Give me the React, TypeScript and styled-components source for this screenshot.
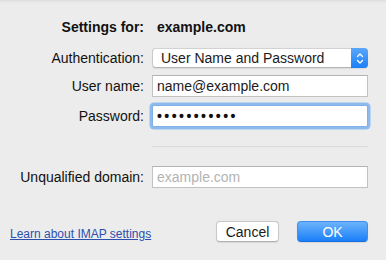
import React from "react";
import styled, { createGlobalStyle } from "styled-components";

const Global = createGlobalStyle`
  html, body { margin: 0; padding: 0; }
  body {
    background: #ececec;
    font-family: "Liberation Sans", Arial, sans-serif;
    color: #1a1a1a;
    width: 386px;
    height: 260px;
    overflow: hidden;
  }
`;

const Sheet = styled.div`
  position: relative;
  width: 386px;
  height: 260px;
  box-sizing: border-box;
  padding-top: 19px;
  background: linear-gradient(#dcdcdc 0px, #e8e8e8 2px, #ececec 4px, #ececec 100%);
`;

const Form = styled.div`
  display: grid;
  grid-template-columns: 144px 216px;
  column-gap: 8px;
  align-items: center;
`;

const Label = styled.div<{ $top?: number; $bold?: boolean }>`
  margin-top: ${(p) => p.$top ?? 0}px;
  text-align: right;
  font-size: 14px;
  font-weight: ${(p) => (p.$bold ? 700 : 400)};
  line-height: 16px;
  color: #111;
`;

const Value = styled.div<{ $top?: number }>`
  margin-top: ${(p) => p.$top ?? 0}px;
  padding-left: 5px;
  font-size: 14px;
  font-weight: 700;
  line-height: 16px;
  color: #111;
`;

const Popup = styled.div<{ $top?: number }>`
  margin-top: ${(p) => p.$top ?? 0}px;
  height: 20px;
  box-sizing: border-box;
  display: flex;
  align-items: stretch;
  background: #fff;
  border-radius: 4px;
  border: 1px solid #c9c9c9;
  border-top-color: #d2d2d2;
  border-bottom-color: #b4b4b4;
  box-shadow: 0 0.5px 1px rgba(0, 0, 0, 0.08);
`;

const PopupText = styled.div`
  flex: 1;
  font-size: 14px;
  line-height: 18px;
  padding-left: 8px;
  color: #1a1a1a;
`;

const Stepper = styled.div`
  width: 17px;
  margin: -1px -1px -1px 0;
  border-radius: 0 4px 4px 0;
  background: linear-gradient(#5aa7fb, #1b7ff7);
  display: flex;
  align-items: center;
  justify-content: center;
`;

const Field = styled.div<{ $top?: number; $focus?: boolean; $placeholder?: boolean }>`
  margin-top: ${(p) => p.$top ?? 0}px;
  height: 22px;
  box-sizing: border-box;
  background: #fff;
  border: 1px solid ${(p) => (p.$focus ? "#7eb1e8" : "#c2c2c2")};
  border-top-color: ${(p) => (p.$focus ? "#7eb1e8" : "#b3b3b3")};
  box-shadow: ${(p) => (p.$focus ? "0 0 0 2.5px #8dbbf0" : "none")};
  border-radius: ${(p) => (p.$focus ? "2px" : "0")};
  padding-left: 4px;
  font-size: 14px;
  line-height: 20px;
  color: ${(p) => (p.$placeholder ? "#b3b3b3" : "#1a1a1a")};
`;

const Dots = styled.span`
  font-size: 14px;
  letter-spacing: 2.45px;
  color: #111;
  font-weight: 700;
`;

const Separator = styled.div<{ $top?: number }>`
  grid-column: 2;
  margin-top: ${(p) => p.$top ?? 0}px;
  height: 1px;
  background: #d9d9d9;
`;

const Footer = styled.div`
  display: flex;
  align-items: center;
  margin-top: 33px;
  padding: 0 18px 0 10px;
`;

const Link = styled.a`
  font-size: 12px;
  color: #2c4fae;
  text-decoration: underline;
  margin-top: 4px;
  flex: 1;
  cursor: pointer;
`;

const Button = styled.button<{ $primary?: boolean }>`
  height: 21px;
  box-sizing: border-box;
  font-family: "Liberation Sans", Arial, sans-serif;
  font-size: 14px;
  line-height: 18px;
  padding: 0;
  border-radius: 4px;
  width: ${(p) => (p.$primary ? "71px" : "63px")};
  margin-left: ${(p) => (p.$primary ? "18px" : "0")};
  color: ${(p) => (p.$primary ? "#fff" : "#1a1a1a")};
  background: ${(p) => (p.$primary ? "linear-gradient(#6cb4fb, #1a7ff9)" : "#fff")};
  border: 1px solid ${(p) => (p.$primary ? "#3d8ff3" : "#c8c8c8")};
  border-bottom-color: ${(p) => (p.$primary ? "#1a6fe0" : "#b0b0b0")};
  box-shadow: 0 0.5px 1px rgba(0, 0, 0, 0.08);
`;

export default function App() {
  return (
    <>
      <Global />
      <Sheet>
        <Form>
          <Label $bold>Settings for:</Label>
          <Value>example.com</Value>

          <Label $top={13}>Authentication:</Label>
          <Popup $top={13}>
            <PopupText>User Name and Password</PopupText>
            <Stepper>
              <svg width="8" height="13" viewBox="0 0 8 13" fill="none">
                <path d="M1.5 4.5 L4 2 L6.5 4.5" stroke="#fff" strokeWidth="1.3" strokeLinecap="round" strokeLinejoin="round" />
                <path d="M1.5 8.5 L4 11 L6.5 8.5" stroke="#fff" strokeWidth="1.3" strokeLinecap="round" strokeLinejoin="round" />
              </svg>
            </Stepper>
          </Popup>

          <Label $top={7}>User name:</Label>
          <Field $top={7}>name@example.com</Field>

          <Label $top={8}>Password:</Label>
          <Field $top={8} $focus>
            <Dots>•••••••••••</Dots>
          </Field>

          <Separator $top={19} />

          <Label $top={19}>Unqualified domain:</Label>
          <Field $top={19} $placeholder>example.com</Field>
        </Form>
        <Footer>
          <Link>Learn about IMAP settings</Link>
          <Button>Cancel</Button>
          <Button $primary>OK</Button>
        </Footer>
      </Sheet>
    </>
  );
}
